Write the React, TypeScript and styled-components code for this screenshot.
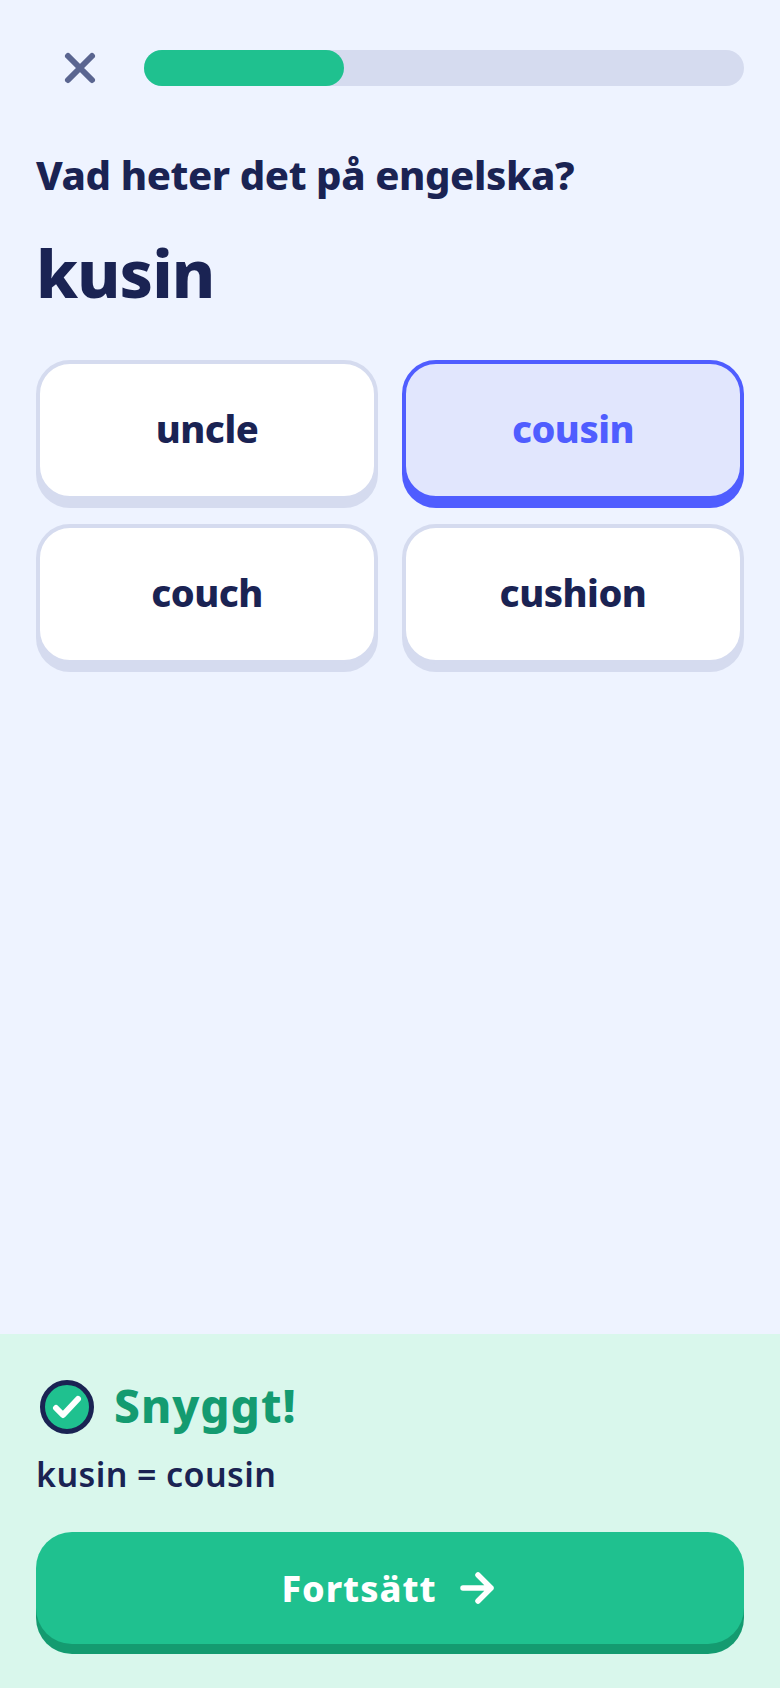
import styled, { createGlobalStyle } from "styled-components";

const options = [
  { id: 1, label: "uncle" },
  { id: 2, label: "cousin", selected: true },
  { id: 3, label: "couch" },
  { id: 4, label: "cushion" },
];

const GlobalStyle = createGlobalStyle`
  html, body {
    margin: 0;
    padding: 0;
    background: #eef3ff;
  }
  * {
    box-sizing: border-box;
  }
`;

export default function App() {
  return (
    <Page>
      <GlobalStyle />
      <Main>
        <TopBar>
          <CloseButton aria-label="Stäng">
            <svg width="36" height="36" viewBox="0 0 36 36" fill="none">
              <path
                d="M6 6 L30 30 M30 6 L6 30"
                stroke="#5a6590"
                strokeWidth="6"
                strokeLinecap="round"
              />
            </svg>
          </CloseButton>
          <Track>
            <Fill />
          </Track>
        </TopBar>
        <Question>Vad heter det på engelska?</Question>
        <Word>kusin</Word>
        <Options>
          {options.map((option) => (
            <Option key={option.id} $selected={option.selected}>
              {option.label}
            </Option>
          ))}
        </Options>
      </Main>
      <Feedback>
        <Result>
          <CheckBadge>
            <svg width="30" height="26" viewBox="0 0 30 26" fill="none">
              <path
                d="M4 14 L11 21 L26 5"
                stroke="#fff"
                strokeWidth="6"
                strokeLinecap="round"
                strokeLinejoin="round"
              />
            </svg>
          </CheckBadge>
          <ResultTitle>Snyggt!</ResultTitle>
        </Result>
        <Translation>kusin = cousin</Translation>
        <ContinueButton>
          Fortsätt
          <svg width="34" height="32" viewBox="0 0 34 32" fill="none">
            <path
              d="M3 16 H31 M18 3 L31 16 L18 29"
              stroke="#fff"
              strokeWidth="5.5"
              strokeLinecap="round"
              strokeLinejoin="round"
            />
          </svg>
        </ContinueButton>
      </Feedback>
    </Page>
  );
}

const fontStack = `"Noto Sans", "Open Sans", sans-serif`;

const Page = styled.div`
  display: flex;
  flex-direction: column;
  min-height: 1688px;
  font-family: ${fontStack};
  color: #1a2353;
`;

const Main = styled.main`
  flex: 1;
  padding: 50px 36px 0;
`;

const TopBar = styled.div`
  display: flex;
  align-items: center;
  gap: 20px;
`;

const CloseButton = styled.button`
  display: flex;
  align-items: center;
  justify-content: center;
  width: 88px;
  height: 36px;
  padding: 0;
  border: none;
  background: none;
`;

const Track = styled.div`
  flex: 1;
  height: 36px;
  border-radius: 18px;
  background: #d5dbef;
`;

const Fill = styled.div`
  width: 200px;
  height: 100%;
  border-radius: 18px;
  background: #1fc18f;
`;

const Question = styled.h1`
  margin: 64px 0 0;
  font-size: 40px;
  line-height: 50px;
  font-weight: 800;
  letter-spacing: -0.4px;
`;

const Word = styled.h2`
  margin: 30px 0 0;
  font-size: 66px;
  line-height: 84px;
  font-weight: 800;
  letter-spacing: -1px;
`;

const Options = styled.div`
  display: grid;
  grid-template-columns: 342px 342px;
  gap: 24px;
  margin-top: 46px;
`;

const Option = styled.button<{ $selected?: boolean }>`
  height: 140px;
  padding: 0 0 4px;
  border: 4px solid ${(p) => (p.$selected ? "#4f5dff" : "#d5dbef")};
  border-radius: 34px;
  background: ${(p) => (p.$selected ? "#e1e6fd" : "#fff")};
  box-shadow: 0 8px 0 ${(p) => (p.$selected ? "#4f5dff" : "#d5dbef")};
  color: ${(p) => (p.$selected ? "#4f5dff" : "#1a2353")};
  font-family: inherit;
  font-size: 38px;
  font-weight: 800;
  letter-spacing: -0.5px;
`;

const Feedback = styled.section`
  display: flex;
  flex-direction: column;
  height: 354px;
  padding: 46px 36px 0;
  background: #d9f7ec;
`;

const Result = styled.div`
  display: flex;
  align-items: center;
  gap: 20px;
  padding-left: 4px;
`;

const CheckBadge = styled.div`
  display: flex;
  align-items: center;
  justify-content: center;
  width: 54px;
  height: 54px;
  border: 5px solid #1a2353;
  border-radius: 50%;
  background: #1fc18f;
`;

const ResultTitle = styled.div`
  padding-bottom: 4px;
  color: #149b70;
  font-size: 46px;
  line-height: 50px;
  font-weight: 800;
  letter-spacing: 1px;
`;

const Translation = styled.div`
  margin-top: 18px;
  font-size: 34px;
  line-height: 44px;
  font-weight: 600;
  letter-spacing: 0.4px;
`;

const ContinueButton = styled.button`
  display: flex;
  align-items: center;
  justify-content: center;
  gap: 23px;
  height: 112px;
  margin-top: 36px;
  padding: 0 5px 0 0;
  border: none;
  border-radius: 36px;
  background: #1fc18f;
  box-shadow: 0 10px 0 #149b70;
  color: #fff;
  font-family: inherit;
  font-size: 36px;
  font-weight: 800;
  letter-spacing: 1px;
`;
